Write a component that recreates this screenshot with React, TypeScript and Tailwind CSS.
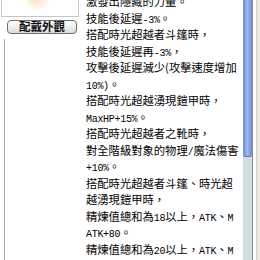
const L = ({ children }: { children: React.ReactNode }) => (
    <span className="font-['Liberation_Mono',monospace] text-[10px] leading-none tracking-[-0.3px]">{children}</span>
)

const lines: React.ReactNode[] = [
    <>激發出隱藏的力量。</>,
    <>技能後延遲<L>-3%</L>。</>,
    <>搭配時光超越者斗篷時，</>,
    <>技能後延遲再<L>-3%</L>，</>,
    <>攻擊後延遲減少(攻擊速度增加</>,
    <><L>10%)</L>。</>,
    <>搭配時光超越湧現鎧甲時，</>,
    <><L>MaxHP+15%</L>。</>,
    <>搭配時光超越者之靴時，</>,
    <>對全階級對象的物理<L>/</L>魔法傷害</>,
    <><L>+10%</L>。</>,
    <>搭配時光超越者斗篷、時光超</>,
    <>越湧現鎧甲時，</>,
    <>精煉值總和為<L>18</L>以上，<L>ATK</L>、<L>M</L></>,
    <><L>ATK+80</L>。</>,
    <>精煉值總和為<L>20</L>以上，<L>ATK</L>、<L>M</L></>,
]

const App = () => {
    return (
        <div className="w-[260px] h-[260px] overflow-hidden bg-white flex font-['Noto_Sans_CJK_TC',sans-serif] text-black">
            <div className="w-[80px] shrink-0 flex flex-col">
                <div className="ml-[1px] w-[78px] h-[17px] border border-t-0 border-[#c6c6c6] bg-white relative overflow-hidden">
                    <div className="absolute left-[22px] -top-[14px] w-[26px] h-[24px] rounded-full bg-[radial-gradient(circle,#fbe2bd_0%,#fdf1e0_45%,#ffffff_75%)]" />
                </div>
                <button className="mt-[3px] ml-[7px] w-[70px] h-[14px] rounded-[4px] border border-[#6e6e6e] bg-gradient-to-b from-white to-[#dcdcdc] flex items-center justify-center text-[11.5px] leading-none font-bold text-[#111]">
                    配戴外觀
                </button>
                <div className="mt-[5px] ml-[4px] flex-1 border-l border-[#a9a9a9]" />
            </div>
            <div className="ml-[6px] flex-1 overflow-hidden">
                <div className="-mt-[7px] text-[11.3px] whitespace-nowrap">
                    {lines.map((l, i) => (
                        <div key={i} className="h-[16.5px] leading-[16.5px]">{l}</div>
                    ))}
                </div>
            </div>
            <div className="w-[9px] shrink-0 bg-[#d3dee1] flex flex-col">
                <div className="h-[157px] rounded-b-[2px] bg-gradient-to-r from-[#6a89d8] via-[#a0b8f0] to-[#6a89d8] border-b border-[#5a78c8]" />
            </div>
            <div className="w-[1px] shrink-0 bg-[#8e8e8e]" />
            <div className="w-[3px] shrink-0 bg-white" />
            <div className="w-[1px] shrink-0 bg-[#d2d2d2]" />
            <div className="w-[3px] shrink-0 bg-[#ebe8e1]" />
        </div>
    )
}

export default App
